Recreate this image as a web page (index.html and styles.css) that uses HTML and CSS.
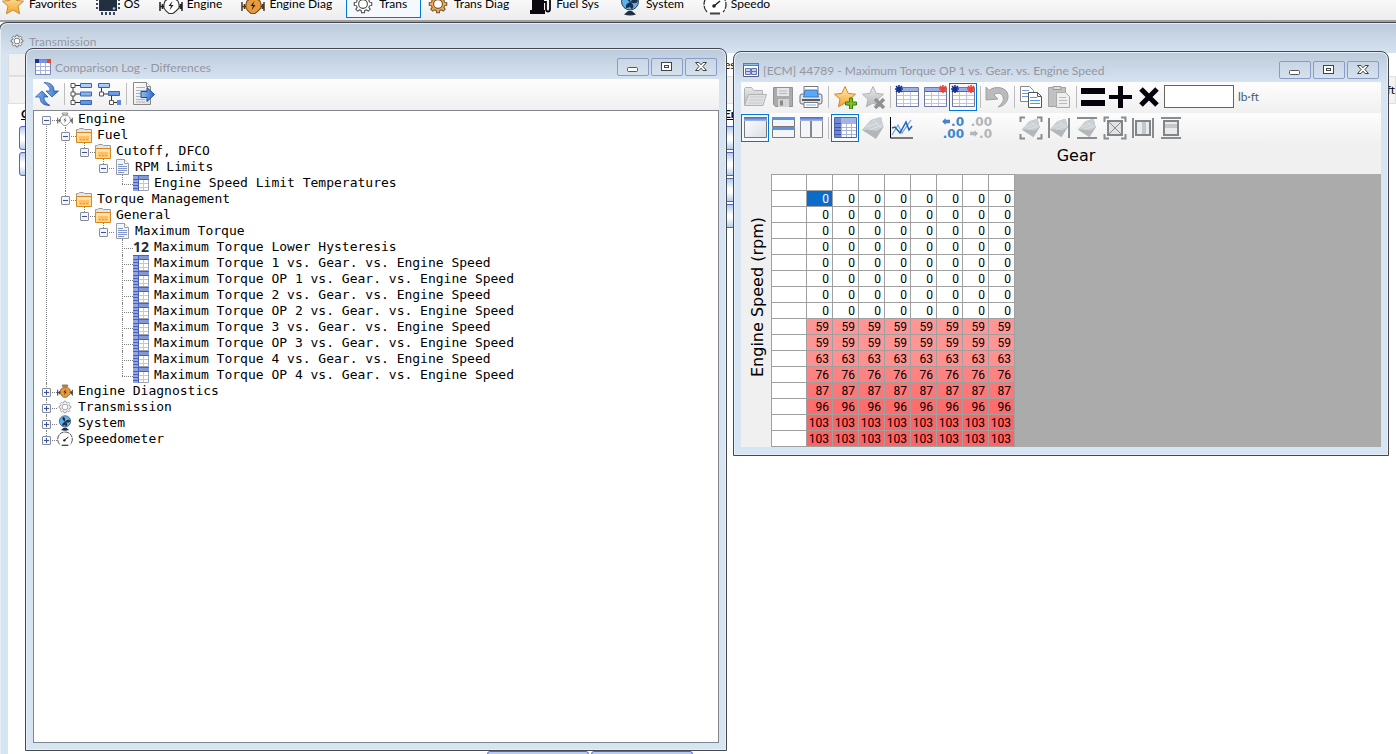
FILE: index.html
```html
<!DOCTYPE html>
<html lang="en">
<head>
<meta charset="utf-8">
<title>Transmission - Comparison Log</title>
<link rel="stylesheet" href="styles.css">
</head>
<body>
<svg class="sprite" aria-hidden="true">
  <defs>
    <linearGradient id="gold" x1="0" y1="0" x2="0" y2="1"><stop offset="0" stop-color="#ffe9b0"/><stop offset="1" stop-color="#f5a52c"/></linearGradient>
    <linearGradient id="blue" x1="0" y1="0" x2="0" y2="1"><stop offset="0" stop-color="#b8d4fb"/><stop offset="1" stop-color="#5c8fe0"/></linearGradient>
    <linearGradient id="deep" x1="0" y1="0" x2="1" y2="0"><stop offset="0" stop-color="#8fc0f2"/><stop offset="1" stop-color="#2a66c8"/></linearGradient>
    <linearGradient id="head" x1="0" y1="0" x2="0" y2="1"><stop offset="0" stop-color="#4a64b8"/><stop offset="1" stop-color="#a9bcf0"/></linearGradient>
    <linearGradient id="gray" x1="0" y1="0" x2="0" y2="1"><stop offset="0" stop-color="#e6e8ea"/><stop offset="1" stop-color="#b4b6b8"/></linearGradient>
    <linearGradient id="paper" x1="0" y1="0" x2="1" y2="1"><stop offset="0" stop-color="#fff"/><stop offset="1" stop-color="#d9dee6"/></linearGradient>

    <path id="starshape" d="M12 1.5l3.2 6.9 7.3.8-5.5 5 1.6 7.6-6.6-3.8-6.6 3.8 1.6-7.6-5.5-5 7.3-.8z"/>
    <path id="engineshape" d="M6 9l3-2h2V5H8V3h8v2h-3v2h3l3 2 1 3v4l-3 3-3 2.500h-4L7 19l-2-3v-4z"/>
    <path id="gearshape" d="M10.4 2h3.2l.5 2.6 1.8.7L18 3.800l2.200 2.200-1.500 2.100.7 1.800 2.600.5v3.200l-2.600.5-.7 1.800 1.500 2.100-2.200 2.200-2.100-1.500-1.800.7-.5 2.600h-3.200l-.5-2.600-1.800-.7L6 20.200 3.800 18l1.500-2.100-.7-1.800L2 13.600v-3.200l2.600-.5.7-1.800L3.800 6 6 3.800l2.100 1.500 1.800-.7z"/>

    <symbol id="star" viewBox="0 0 24 24"><use href="#starshape" fill="url(#gold)" stroke="#c98a30"/></symbol>
    <symbol id="chip" viewBox="0 0 24 24"><path d="M3 2h18v17H3z" fill="#222f40"/><path d="M1 3v16M23 3v16" stroke="#3d4857" stroke-width="2" stroke-dasharray="2 2"/><path d="M5 21.500h15" stroke="#3d4857" stroke-width="3" stroke-dasharray="2 2"/><circle cx="18" cy="16.500" r="1.300" fill="#9cc3e4"/></symbol>
    <symbol id="engine" viewBox="0 0 24 24"><use href="#engineshape" fill="#fff" stroke="#333" stroke-width="1.100"/><path d="M1 10v9M1 14.500h4M23 10v9M20 14.500h3M3.500 12v5M21.500 12v5" stroke="#222" stroke-width="1.500" fill="none"/><path d="M13.500 9l-4 5h2.500l-1.500 4.500 4-5.500h-2.500z" fill="#222"/></symbol>
    <symbol id="engined" viewBox="0 0 24 24"><use href="#engineshape" fill="#e89a3c" stroke="#7a5020" stroke-width="1.100"/><path d="M1 10v9M1 14.500h4M23 10v9M20 14.500h3M3.500 12v5M21.500 12v5" stroke="#4a3a28" stroke-width="1.500" fill="none"/><path d="M13.500 9l-4 5h2.500l-1.500 4.500 4-5.500h-2.500z" fill="#222"/></symbol>
    <symbol id="gear" viewBox="0 0 24 24"><g transform="translate(1.500 1.500) scale(.875)"><use href="#gearshape" fill="#fff" stroke="#444" stroke-width="1.200"/><circle cx="12" cy="12" r="5" fill="#fff" stroke="#444" stroke-width="1.200"/></g></symbol>
    <symbol id="geard" viewBox="0 0 24 24"><g transform="translate(1.500 1.500) scale(.875)"><use href="#gearshape" fill="#f3a94c" stroke="#6b5130" stroke-width="1.200"/><circle cx="12" cy="12" r="5" fill="#fff" stroke="#6b5130" stroke-width="1.200"/></g></symbol>
    <symbol id="fuel" viewBox="0 0 24 24"><path d="M4 1h12v17h1v4H2v-4h2z" fill="#0c0710"/><path d="M6 3h8v5H6z" fill="#fff"/><path d="M16 10h2v7q0 2.500 2 2.500t2-2.500V6l-3-3" fill="none" stroke="#0c0710" stroke-width="1.800"/></symbol>
    <symbol id="system" viewBox="0 0 24 24"><circle cx="12" cy="9.500" r="8.500" fill="#5fb0ee" stroke="#2c3f56"/><path d="M12 10C9 8 7 6 9 3q4 0 3 7zM12 10c3-3 6-4 8-1q-2 4-8 1zM12 10c1 4 0 6-4 6q-1-4 4-6zM12 10c4 2 4 5 2 7q-3-1-2-7z" fill="#1f2f44"/><path d="M10 19h4l4 3.500q-6 2-12 0z" fill="#1f2f44"/></symbol>
    <symbol id="speedo" viewBox="0 0 24 24"><path d="M4 20A11 11 0 1 1 20 20" fill="#fff" stroke="#333" stroke-width="1.300" stroke-dasharray="7 1"/><circle cx="11" cy="14" r="1.800" fill="#222"/><path d="M11 14l6-5" stroke="#222" stroke-width="1.500"/><path d="M7 21.500h10" stroke="#444" stroke-width="2"/></symbol>

    <symbol id="complog" viewBox="0 0 16 16"><path d="M.5.5h15v15H.5z" fill="#fff" stroke="#7a86b0"/><path d="M1 1h14v3H1z" fill="#7d93dd"/><path d="M5.500 4v11M10.500 4v11M1 7.500h14M1 11.500h14" stroke="#a9b4dc"/><path d="M0 0h4v4H0z" fill="#17349c"/><path d="M12 0h4v4h-4z" fill="#ea4431"/></symbol>
    <symbol id="ecmwin" viewBox="0 0 16 16"><path d="M.5 1.500h15v13H.5z" fill="#fff" stroke="#555e78"/><path d="M0 1h16v3H0z" fill="#3d83d8"/><path d="M1 2h14v1H1z" fill="#8ec0f4"/><path d="M2.500 6.500h5v3h-5zM8.500 6.500h5v3h-5zM2.500 9.500h5v3h-5zM8.500 9.500h5v3h-5z" fill="#c9d3f0" stroke="#6474b0"/></symbol>
    <symbol id="min" viewBox="0 0 30 16"><rect x="9.500" y="8.500" width="10" height="4" rx="1" fill="#fff" stroke="#555"/></symbol>
    <symbol id="max" viewBox="0 0 30 16"><rect x="9.500" y="3.500" width="10" height="8" fill="#fff" stroke="#444"/><rect x="12.500" y="6.500" width="4" height="2" fill="#fff" stroke="#444"/></symbol>
    <symbol id="close" viewBox="0 0 30 16"><path d="M9.500 3.500h3.500l2 2.300 2-2.300h3.500l-3.600 4 3.600 4h-3.500l-2-2.300-2 2.300H9.500l3.600-4z" fill="#fff" stroke="#444"/></symbol>

    <symbol id="refresh" viewBox="0 0 24 24"><path d="M9 .5c7 0 10 3 10 8.500h4.500l-6.500 6-6-6h4c0-4-2-6-6-8.500z" fill="url(#deep)" stroke="#2a5aa8" stroke-width=".8"/><path d="M15 23.500c-7 0-10-3-10-8.500H.5L7 9l6 6H9c0 4 2 6 6 8.500z" fill="url(#deep)" stroke="#2a5aa8" stroke-width=".8"/></symbol>
    <symbol id="expand" viewBox="0 0 24 24"><path d="M4 4v17M4 3.500h7M4 12h7M4 20.500h7" stroke="#333" fill="none"/><path d="M2 1.500h4v4H2zM2 10h4v4H2zM2 18.500h4v4H2z" fill="#fff" stroke="#555"/><path d="M11.500 1.500h11v4h-11zM11.500 10h11v4h-11zM11.500 18.500h11v4h-11z" fill="url(#blue)" stroke="#3a66b0"/></symbol>
    <symbol id="collapse" viewBox="0 0 24 24"><path d="M4.500 5v7h7M14.500 14v6.500h6" stroke="#333" fill="none"/><path d="M2.500 10h4v4h-4zM12.500 18.500h4v4h-4z" fill="#fff" stroke="#555"/><path d="M1.500 1.500h11v4h-11zM11.500 9.500h11v4h-11z" fill="url(#blue)" stroke="#3a66b0"/><path d="M20 18h4v5h-4z" fill="#5f8cd8"/></symbol>
    <symbol id="export" viewBox="0 0 24 24"><path d="M2.500.5h13l4 4v18h-17z" fill="url(#paper)" stroke="#888"/><path d="M15.500.5v4h4" fill="#fff" stroke="#888"/><path d="M5 5.500h9M5 8.500h11M5 11.500h11M5 14.500h11M5 17.500h9M5 20h9" stroke="#b0b3b8"/><path d="M10 9.500h6v-4l7.500 7-7.500 7v-4h-6z" fill="url(#deep)" stroke="#1f4c9c"/></symbol>

    <symbol id="open" viewBox="0 0 24 24"><path d="M1.500 20.500V3.500l1-1h6l2 3h9v4" fill="url(#gray)" stroke="#b0b2b4"/><path d="M1.500 20.500l4-11h18l-3.500 11z" fill="#dfe1e3" stroke="#b0b2b4"/><path d="M7 12h14M6 15h14M5 18h14" stroke="#c6c8ca"/></symbol>
    <symbol id="save" viewBox="0 0 24 24"><path d="M2.500 2.500h19v19h-17l-2-2z" fill="#a9abad" stroke="#909294"/><path d="M6 3h12v8H6z" fill="#e4e5e6"/><path d="M8 6h8M8 8.500h8" stroke="#b8babc"/><path d="M7 14h11v8H7z" fill="#d2d4d6"/><path d="M9 15.500h3v5H9z" fill="#888"/></symbol>
    <symbol id="print" viewBox="0 0 24 24"><path d="M5 1.500h14v7H5z" fill="#fff" stroke="#777"/><rect x="1" y="9" width="22" height="10" rx="2" fill="#e2e3e6" stroke="#6b6e75"/><path d="M6 5h12l1.500 7h-15z" fill="#5aa9f4" stroke="#2a6cb8" stroke-width=".8"/><path d="M3 15h18" stroke="#555b66" stroke-width="2"/><path d="M5 17.500h14v5H5z" fill="#fff" stroke="#777"/><path d="M7 20h10" stroke="#7db1e8"/></symbol>
    <symbol id="staradd" viewBox="0 0 24 24"><use href="#starshape" fill="url(#gold)" stroke="#c98a30"/><path d="M16.500 13h3v4h4v3h-4v4h-3v-4h-4v-3h4z" fill="#7cc224" stroke="#3d7810"/></symbol>
    <symbol id="stardel" viewBox="0 0 24 24"><use href="#starshape" fill="url(#gray)" stroke="#b2b5b8"/><path d="M14 14l9 9M23 14l-9 9" stroke="#8f9193" stroke-width="3.500"/></symbol>
    <symbol id="gridbase" viewBox="0 0 24 24"><path d="M1.500 2.500h22v19h-22z" fill="#fff" stroke="#7078a0"/><path d="M2 3h21v3H2z" fill="#9aaee8"/><path d="M2 6.500h21" stroke="#5567a8"/><path d="M8.500 7v14M15.500 7v14M2 10.500h21M2 14.500h21M2 18.500h21" stroke="#bcc4e2"/></symbol>
    <symbol id="burst" viewBox="0 0 8 8"><path d="M4 0v8M0 4h8M1 1l6 6M7 1L1 7" stroke="currentColor" stroke-width="1.600"/></symbol>
    <symbol id="gridl" viewBox="0 0 24 24"><use href="#gridbase" width="24" height="24"/><use href="#burst" width="8" height="8" color="#122e92"/></symbol>
    <symbol id="gridr" viewBox="0 0 24 24"><use href="#gridbase" width="24" height="24"/><use href="#burst" x="16" width="8" height="8" color="#f04030"/></symbol>
    <symbol id="gridlr" viewBox="0 0 24 24"><use href="#gridl" width="24" height="24"/><use href="#burst" x="16" width="8" height="8" color="#f04030"/></symbol>
    <symbol id="undo" viewBox="0 0 24 24"><path d="M1 2l3 3.500C10 0 23 2 23 11c0 6-4 10-10 11 5-4 6-7 5-10-1-4-6-5-9-2l4 4L1 15z" fill="#b9bbbd" stroke="#a0a2a4"/></symbol>
    <symbol id="copy" viewBox="0 0 24 24"><path d="M1.500 1.500h9l4 4v11h-13z" fill="#fff" stroke="#888"/><path d="M3 5.500h7M3 8.500h7M3 11.500h7" stroke="#6c9be0"/><path d="M9.500 7.500h9l4 4v11h-13z" fill="#fff" stroke="#555"/><path d="M18.500 7.500v4h4" fill="none" stroke="#555"/><path d="M11 12.500h7M11 15.500h10M11 18.500h10" stroke="#48a0e8"/></symbol>
    <symbol id="paste" viewBox="0 0 24 24"><path d="M1.500 2.500h17v19h-17z" fill="#bfc1c3" stroke="#a0a2a4"/><path d="M6 1.500h8v3H6z" fill="#ddd" stroke="#999"/><path d="M9.500 7.500h9l4 4v11h-13z" fill="#eee" stroke="#aaa"/><path d="M12 12.500h7M12 15.500h8M12 18.500h8" stroke="#bbb"/></symbol>
    <symbol id="eq" viewBox="0 0 24 24"><path d="M0 3h24v6H0zM0 15h24v6H0z" fill="#07010c"/></symbol>
    <symbol id="plus" viewBox="0 0 24 24"><path d="M9 1h5v9h9v4h-9v9H9v-9H0v-4h9z" fill="#07010c"/></symbol>
    <symbol id="times" viewBox="0 0 24 24"><path d="M4 4l16 16M20 4L4 20" stroke="#07010c" stroke-width="5"/></symbol>

    <symbol id="pane1" viewBox="0 0 24 24"><path d="M1.500 1.500h22v20h-22z" fill="url(#paper)" stroke="#777"/><path d="M1 1h23v4H1z" fill="url(#head)"/></symbol>
    <symbol id="pane2" viewBox="0 0 24 24"><path d="M1.500 1.500h22v9h-22zM1.500 12.500h22v9h-22z" fill="#f4f5f8" stroke="#777"/><path d="M1 1h23v3H1zM1 11h23v3H1z" fill="#5a94e0"/></symbol>
    <symbol id="pane3" viewBox="0 0 24 24"><path d="M1.500 1.500h10v20h-10zM12.500 1.500h11v20h-11z" fill="#f4f5f8" stroke="#888"/><path d="M1 1h23v4H1z" fill="url(#head)"/></symbol>
    <symbol id="table" viewBox="0 0 24 24"><path d="M1.500 1.500h22v20h-22z" fill="#fff" stroke="#5666a4"/><path d="M2 2h21v5H2z" fill="#a3b4ea"/><path d="M2 2h6v19H2z" fill="#6f88d4"/><path d="M8.500 2v19M13.500 2v19M18.500 2v19M8 7.500h15M8 11.500h15M8 14.500h15M8 18.500h15" stroke="#a9b3d6"/><path d="M2 7.500h6M2 11.500h6M2 14.500h6M2 18.500h6" stroke="#3d55a4"/></symbol>
    <symbol id="surface" viewBox="0 0 24 24"><path d="M1 14L10 4l10-3 2.500 10-7.500 12z" fill="#b4b7ba"/><path d="M1 14L10 4l10-3 2.500 10-7 4-7-1.500z" fill="#cbd0d4"/><path d="M5 11l12-4M8 14l13-5M12 4l8 8" stroke="#dde2e6"/></symbol>
    <symbol id="chart" viewBox="0 0 24 24"><path d="M1.500 1v21H24" fill="none" stroke="#000"/><path d="M3 19l6-10 4 8 9-13" fill="none" stroke="#6ea6e2" stroke-width="1.200"/><path d="M3 12l3-1 5 6 6-11 3 8 3-4" fill="none" stroke="#1d62b4" stroke-width="1.500"/></symbol>
    <symbol id="left" viewBox="0 0 10 8"><path d="M0 4l4-4v2h5v4H4v2z" fill="currentColor"/></symbol>
    <symbol id="right" viewBox="0 0 10 8"><path d="M9 4L5 0v2H0v4h5v2z" fill="currentColor"/></symbol>
    <symbol id="corners" viewBox="0 0 24 24"><path d="M6 1.500H1.500V6M18 1.500h4.500V6M6 22.500H1.500V18M18 22.500h4.500V18" fill="none" stroke="#8a8c8e" stroke-width="2"/></symbol>
    <symbol id="fit1" viewBox="0 0 24 24"><use href="#surface" x="2" y="2" width="20" height="20"/><use href="#corners" width="24" height="24"/></symbol>
    <symbol id="fit2" viewBox="0 0 24 24"><use href="#surface" x="2" y="1" width="20" height="22"/><path d="M2 2v20M22 2v20" stroke="#8a8c8e" stroke-width="2"/></symbol>
    <symbol id="fit3" viewBox="0 0 24 24"><use href="#surface" x="2" y="2" width="20" height="20"/><path d="M2 2h20M2 22h20" stroke="#8a8c8e" stroke-width="2"/></symbol>
    <symbol id="fit4" viewBox="0 0 24 24"><path d="M5 5h14v14H5z" fill="#e0e2e4" stroke="#7f8589" stroke-width="2"/><path d="M6 6l12 12M18 6L6 18" stroke="#8a8c8e"/><use href="#corners" width="24" height="24"/></symbol>
    <symbol id="fit5" viewBox="0 0 24 24"><path d="M5 5h14v14H5z" fill="#e8eaec" stroke="#7f8589" stroke-width="2"/><path d="M11 6h4v12h-4z" fill="#c4c8cb"/><path d="M2 2v20M22 2v20" stroke="#8a8c8e" stroke-width="2"/></symbol>
    <symbol id="fit6" viewBox="0 0 24 24"><path d="M5 5h14v14H5z" fill="#e8eaec" stroke="#7f8589" stroke-width="2"/><path d="M6 8h12v4H6z" fill="#c4c8cb"/><path d="M2 2h20M2 22h20" stroke="#8a8c8e" stroke-width="2"/></symbol>

    <symbol id="folder" viewBox="0 0 16 16"><path d="M.5 14.500v-12h2l1-1h4l1 1h7v12z" fill="#e3e5ec" stroke="#9a9da8"/><path d="M.5 5.500h15v10H.5z" fill="#ffdc9a" stroke="#d8871c"/><path d="M2 7h12" stroke="#fff0cc"/><path d="M3 9h10v5H3z" fill="#ffc063"/><path d="M4 12.500h8" stroke="#f0a040" stroke-dasharray="2 1"/></symbol>
    <symbol id="doc" viewBox="0 0 16 16"><path d="M2.500.5h8l4 4v11h-12z" fill="#f2f5fa" stroke="#9a9da4"/><path d="M10.500.5v4h4" fill="#fff" stroke="#9a9da4"/><path d="M4 5.500h5M4 7.500h9M4 9.500h9M4 11.500h9M4 13.500h6" stroke="#7f97cc"/></symbol>
    <symbol id="cells" viewBox="0 0 16 16"><path d="M.5.5h15v15H.5z" fill="#fff" stroke="#a0a6b4"/><path d="M0 0h16v5H0z" fill="#8298dc"/><path d="M0 1h5v15H0z" fill="#8fa5e6"/><path d="M0 .5h16M0 4.500h16M0 7.500h5M0 10.500h5M0 13.500h5M5.500 0v16" stroke="#4a62b4"/><path d="M6 8.500h9M6 12.500h9M10.500 5v10" stroke="#c4c8d0"/></symbol>
  </defs>
</svg>

<nav class="ribbon" aria-label="Sections">
  <button class="section"><svg><use href="#star"/></svg>Favorites</button>
  <button class="section"><svg><use href="#chip"/></svg>OS</button>
  <button class="section"><svg><use href="#engine"/></svg>Engine</button>
  <button class="section"><svg><use href="#engined"/></svg>Engine Diag</button>
  <button class="section active"><svg><use href="#gear"/></svg>Trans</button>
  <button class="section"><svg><use href="#geard"/></svg>Trans Diag</button>
  <button class="section"><svg><use href="#fuel"/></svg>Fuel Sys</button>
  <button class="section"><svg><use href="#system"/></svg>System</button>
  <button class="section"><svg><use href="#speedo"/></svg>Speedo</button>
</nav>

<main class="desktop">
  <section class="window trans">
    <header class="titlebar"><svg class="winicon"><use href="#gear"/></svg><h2>Transmission</h2></header>
    <div class="form">
      <div class="form-tabs"><span class="tab"></span><span class="tab-text">es</span></div>
      <div class="form-info"><span>ft</span></div>
      <div class="form-body">
        <div class="form-col"><h3>C</h3><button class="field" aria-label="Edit"></button><button class="field" aria-label="View"></button></div>
        <div class="form-col"><h3>En</h3><button class="field" aria-label="Table 1"></button><button class="field" aria-label="Table 2"></button><button class="field" aria-label="Table 3"></button><button class="field" aria-label="Table 4"></button></div>
      </div>
      <div class="form-foot"><button class="field" aria-label="Previous"></button><button class="field" aria-label="Next"></button></div>
    </div>
  </section>

  <section class="window log">
    <header class="titlebar">
      <svg class="winicon"><use href="#complog"/></svg><h2>Comparison Log - Differences</h2>
      <button class="ctl" aria-label="Minimize"><svg><use href="#min"/></svg></button><button class="ctl" aria-label="Maximize"><svg><use href="#max"/></svg></button><button class="ctl" aria-label="Close"><svg><use href="#close"/></svg></button>
    </header>
    <div class="toolbar">
      <button class="tool" aria-label="Refresh"><svg><use href="#refresh"/></svg></button>
      <i class="sep"></i>
      <button class="tool" aria-label="Expand all"><svg><use href="#expand"/></svg></button>
      <button class="tool" aria-label="Collapse all"><svg><use href="#collapse"/></svg></button>
      <i class="sep"></i>
      <button class="tool" aria-label="Export"><svg><use href="#export"/></svg></button>
    </div>
    <div class="treebox">
      <ul class="tree">
        <li><div class="node"><button class="toggle minus" aria-label="Collapse"></button><svg class="faint"><use href="#engine"/></svg>Engine</div>
          <ul>
            <li><div class="node"><button class="toggle minus" aria-label="Collapse"></button><svg><use href="#folder"/></svg>Fuel</div>
              <ul><li><div class="node"><button class="toggle minus" aria-label="Collapse"></button><svg><use href="#folder"/></svg>Cutoff, DFCO</div>
                <ul><li><div class="node"><button class="toggle minus" aria-label="Collapse"></button><svg><use href="#doc"/></svg>RPM Limits</div>
                  <ul><li><div class="node leaf"><svg><use href="#cells"/></svg>Engine Speed Limit Temperatures</div></li></ul>
                </li></ul>
              </li></ul>
            </li>
            <li><div class="node"><button class="toggle minus" aria-label="Collapse"></button><svg><use href="#folder"/></svg>Torque Management</div>
              <ul><li><div class="node"><button class="toggle minus" aria-label="Collapse"></button><svg><use href="#folder"/></svg>General</div>
                <ul><li><div class="node"><button class="toggle minus" aria-label="Collapse"></button><svg><use href="#doc"/></svg>Maximum Torque</div>
                  <ul>
                    <li><div class="node leaf"><b class="num">12</b>Maximum Torque Lower Hysteresis</div></li>
                    <li><div class="node leaf"><svg><use href="#cells"/></svg>Maximum Torque 1 vs. Gear. vs. Engine Speed</div></li>
                    <li><div class="node leaf"><svg><use href="#cells"/></svg>Maximum Torque OP 1 vs. Gear. vs. Engine Speed</div></li>
                    <li><div class="node leaf"><svg><use href="#cells"/></svg>Maximum Torque 2 vs. Gear. vs. Engine Speed</div></li>
                    <li><div class="node leaf"><svg><use href="#cells"/></svg>Maximum Torque OP 2 vs. Gear. vs. Engine Speed</div></li>
                    <li><div class="node leaf"><svg><use href="#cells"/></svg>Maximum Torque 3 vs. Gear. vs. Engine Speed</div></li>
                    <li><div class="node leaf"><svg><use href="#cells"/></svg>Maximum Torque OP 3 vs. Gear. vs. Engine Speed</div></li>
                    <li><div class="node leaf"><svg><use href="#cells"/></svg>Maximum Torque 4 vs. Gear. vs. Engine Speed</div></li>
                    <li><div class="node leaf"><svg><use href="#cells"/></svg>Maximum Torque OP 4 vs. Gear. vs. Engine Speed</div></li>
                  </ul>
                </li></ul>
              </li></ul>
            </li>
          </ul>
        </li>
        <li><div class="node"><button class="toggle plus" aria-label="Expand"></button><svg><use href="#engined"/></svg>Engine Diagnostics</div></li>
        <li><div class="node"><button class="toggle plus" aria-label="Expand"></button><svg class="faint"><use href="#gear"/></svg>Transmission</div></li>
        <li><div class="node"><button class="toggle plus" aria-label="Expand"></button><svg><use href="#system"/></svg>System</div></li>
        <li><div class="node"><button class="toggle plus" aria-label="Expand"></button><svg><use href="#speedo"/></svg>Speedometer</div></li>
      </ul>
    </div>
  </section>

  <section class="window ecm">
    <header class="titlebar">
      <svg class="winicon"><use href="#ecmwin"/></svg><h2>[ECM] 44789 - Maximum Torque OP 1 vs. Gear. vs. Engine Speed</h2>
      <button class="ctl" aria-label="Minimize"><svg><use href="#min"/></svg></button><button class="ctl" aria-label="Maximize"><svg><use href="#max"/></svg></button><button class="ctl" aria-label="Close"><svg><use href="#close"/></svg></button>
    </header>
    <div class="toolbar">
      <button class="tool" aria-label="Open"><svg><use href="#open"/></svg></button>
      <button class="tool" aria-label="Save"><svg><use href="#save"/></svg></button>
      <button class="tool" aria-label="Print"><svg><use href="#print"/></svg></button>
      <i class="sep"></i>
      <button class="tool" aria-label="Add favorite"><svg><use href="#staradd"/></svg></button>
      <button class="tool" aria-label="Remove favorite"><svg><use href="#stardel"/></svg></button>
      <i class="sep"></i>
      <button class="tool" aria-label="Show base"><svg><use href="#gridl"/></svg></button>
      <button class="tool" aria-label="Show compare"><svg><use href="#gridr"/></svg></button>
      <button class="tool on" aria-label="Show differences"><svg><use href="#gridlr"/></svg></button>
      <i class="sep"></i>
      <button class="tool" aria-label="Undo"><svg><use href="#undo"/></svg></button>
      <i class="sep"></i>
      <button class="tool" aria-label="Copy"><svg><use href="#copy"/></svg></button>
      <button class="tool" aria-label="Paste"><svg><use href="#paste"/></svg></button>
      <i class="sep"></i>
      <button class="tool" aria-label="Set equal"><svg><use href="#eq"/></svg></button>
      <button class="tool" aria-label="Add"><svg><use href="#plus"/></svg></button>
      <button class="tool" aria-label="Multiply"><svg><use href="#times"/></svg></button>
      <input class="amount" id="amount" type="text"><label class="unit" for="amount">lb·ft</label>
    </div>
    <div class="toolbar">
      <button class="tool on" aria-label="Single pane"><svg><use href="#pane1"/></svg></button>
      <button class="tool" aria-label="Split rows"><svg><use href="#pane2"/></svg></button>
      <button class="tool" aria-label="Split columns"><svg><use href="#pane3"/></svg></button>
      <i class="sep"></i>
      <button class="tool on" aria-label="Table"><svg><use href="#table"/></svg></button>
      <button class="tool" aria-label="Surface"><svg><use href="#surface"/></svg></button>
      <button class="tool" aria-label="Chart"><svg><use href="#chart"/></svg></button>
      <i class="gap"></i>
      <button class="tool dec more"><span><svg><use href="#left"/></svg>.0</span><span>.00</span></button>
      <button class="tool dec less"><span>.00</span><span><svg><use href="#right"/></svg>.0</span></button>
      <i class="gap"></i>
      <button class="tool" aria-label="Fit surface"><svg><use href="#fit1"/></svg></button>
      <button class="tool" aria-label="Fit surface width"><svg><use href="#fit2"/></svg></button>
      <button class="tool" aria-label="Fit surface height"><svg><use href="#fit3"/></svg></button>
      <button class="tool" aria-label="Fit table"><svg><use href="#fit4"/></svg></button>
      <button class="tool" aria-label="Fit columns"><svg><use href="#fit5"/></svg></button>
      <button class="tool" aria-label="Fit rows"><svg><use href="#fit6"/></svg></button>
    </div>
    <div class="sheet">
      <div class="xlabel">Gear</div>
      <div class="ylabel">Engine Speed (rpm)</div>
      <div class="gridarea">
        <table class="data">
          <thead><tr><th></th><th></th><th></th><th></th><th></th><th></th><th></th><th></th><th></th></tr></thead>
          <tbody>
            <tr><th></th><td class="sel">0</td><td>0</td><td>0</td><td>0</td><td>0</td><td>0</td><td>0</td><td>0</td></tr>
            <tr><th></th><td>0</td><td>0</td><td>0</td><td>0</td><td>0</td><td>0</td><td>0</td><td>0</td></tr>
            <tr><th></th><td>0</td><td>0</td><td>0</td><td>0</td><td>0</td><td>0</td><td>0</td><td>0</td></tr>
            <tr><th></th><td>0</td><td>0</td><td>0</td><td>0</td><td>0</td><td>0</td><td>0</td><td>0</td></tr>
            <tr><th></th><td>0</td><td>0</td><td>0</td><td>0</td><td>0</td><td>0</td><td>0</td><td>0</td></tr>
            <tr><th></th><td>0</td><td>0</td><td>0</td><td>0</td><td>0</td><td>0</td><td>0</td><td>0</td></tr>
            <tr><th></th><td>0</td><td>0</td><td>0</td><td>0</td><td>0</td><td>0</td><td>0</td><td>0</td></tr>
            <tr><th></th><td>0</td><td>0</td><td>0</td><td>0</td><td>0</td><td>0</td><td>0</td><td>0</td></tr>
            <tr class="h1"><th></th><td>59</td><td>59</td><td>59</td><td>59</td><td>59</td><td>59</td><td>59</td><td>59</td></tr>
            <tr class="h1"><th></th><td>59</td><td>59</td><td>59</td><td>59</td><td>59</td><td>59</td><td>59</td><td>59</td></tr>
            <tr class="h2"><th></th><td>63</td><td>63</td><td>63</td><td>63</td><td>63</td><td>63</td><td>63</td><td>63</td></tr>
            <tr class="h3"><th></th><td>76</td><td>76</td><td>76</td><td>76</td><td>76</td><td>76</td><td>76</td><td>76</td></tr>
            <tr class="h4"><th></th><td>87</td><td>87</td><td>87</td><td>87</td><td>87</td><td>87</td><td>87</td><td>87</td></tr>
            <tr class="h5"><th></th><td>96</td><td>96</td><td>96</td><td>96</td><td>96</td><td>96</td><td>96</td><td>96</td></tr>
            <tr class="h6"><th></th><td>103</td><td>103</td><td>103</td><td>103</td><td>103</td><td>103</td><td>103</td><td>103</td></tr>
            <tr class="h6"><th></th><td>103</td><td>103</td><td>103</td><td>103</td><td>103</td><td>103</td><td>103</td><td>103</td></tr>
          </tbody>
        </table>
      </div>
    </div>
  </section>
</main>
</body>
</html>
```

FILE: styles.css
```css
* { box-sizing: border-box; }
body {
  margin: 0;
  height: 100vh;
  display: flex;
  flex-direction: column;
  overflow: hidden;
  background: #fff;
  color: #000;
  font: 12px/16px Lato, "Noto Sans", sans-serif;
}
button { font: inherit; color: inherit; margin: 0; padding: 0; border: 0; background: none; }
h2, h3 { margin: 0; font: inherit; }
ul { margin: 0; padding: 0; list-style: none; }
svg { display: block; flex: none; }
.sprite { position: absolute; width: 0; height: 0; }

/* Section ribbon */
.ribbon {
  flex: none;
  display: flex;
  align-items: flex-end;
  height: 22px;
  padding-bottom: 2px;
  overflow: hidden;
  background: linear-gradient(#f9f9f9, #ececee);
  border-bottom: 2px solid #a0a0a0;
}
.section {
  flex: none;
  display: flex;
  align-items: center;
  gap: 4px;
  height: 28px;
  padding: 0 13px 0 4px;
  border: 1px solid transparent;
  white-space: nowrap;
}
.section:first-child { padding-left: 0; }
.section svg { width: 24px; height: 24px; }
.section.active { border-color: #0078d7; background: #f5f9fd; }

/* Windows on the desktop */
.desktop { position: relative; flex: 1; min-height: 0; overflow: hidden; }
.window {
  position: absolute;
  display: flex;
  flex-direction: column;
  padding: 0 8px 8px;
  border: 1px solid #45484f;
  border-radius: 8px 8px 0 0;
  background: linear-gradient(#bccbdb, #d7e4f2 32px);
  box-shadow: inset 0 0 0 1px #e6eff8;
}
.titlebar { flex: none; display: flex; align-items: center; gap: 2px; height: 30px; padding: 6px 2px 0; color: #96969f; }
.titlebar h2 { flex: 1; padding: 1px 0 0 2px; white-space: nowrap; overflow: hidden; }
.winicon { width: 16px; height: 16px; }
.ctl {
  width: 32px;
  height: 18px;
  border: 1px solid #8c9ac6;
  border-radius: 2px;
  background: linear-gradient(#c9d6e4, #d6e1ee);
}
.ctl svg { width: 30px; height: 16px; }

.trans { left: -1px; right: -9px; top: 0; bottom: -21px; padding: 0 8px; border-bottom: 0; }
.trans .titlebar { padding: 6px 1px 0; }
.form { flex: 1; display: flex; flex-direction: column; background: #fff; }
.form-tabs { display: flex; align-items: center; height: 23px; gap: 616px; }
.tab { width: 100px; height: 23px; background: #f0f0f0; border: 1px solid #dcdcdc; }
.form-info { display: flex; justify-content: flex-end; align-items: center; height: 28px; background: #f3f3f3; border: 1px solid #e0e0e0; }
.form-body { flex: 1; display: flex; gap: 503px; padding: 2px 11px; }
.form-col { width: 200px; display: flex; flex-direction: column; gap: 2px; }
.form-col h3 { font-weight: bold; text-decoration: underline; height: 18px; padding-left: 2px; }
.field { height: 24px; border: 1px solid #5566c0; border-radius: 3px; background: linear-gradient(#b4cdec, #fff 45%, #fff 60%, #b4cdec); }
.form-foot { display: flex; gap: 2px; padding-left: 479px; }
.form-foot .field { width: 102px; background: #b9c9f4; }

.log { left: 25px; width: calc(50% + 4px); top: 26px; bottom: 3px; padding: 0 7px 7px; }
.ecm { left: calc(50% + 35px); right: 7px; top: 29px; padding: 0 7px 8px; }

/* Toolbars */
.toolbar {
  flex: none;
  display: flex;
  align-items: center;
  height: 31px;
  padding-bottom: 2px;
  background: linear-gradient(#fdfdfd, #f0f0f0);
}
.tool { flex: none; width: 28px; height: 28px; padding: 1px; border: 1px solid transparent; }
.tool svg { width: 24px; height: 24px; }
.tool.on { border-color: #0078d7; background: #f5fafe; }
.sep { flex: none; width: 1px; height: 22px; margin: 0 2px 0 3px; background: #bdbdbd; }
.gap { flex: none; width: 23px; }
.amount { width: 70px; height: 23px; margin-left: 1px; border: 1px solid #646464; background: #fff; }
.unit { padding-left: 4px; color: #44606e; }
.tool.dec { display: flex; flex-direction: column; justify-content: center; font: bold 12px/12px "DejaVu Sans", sans-serif; }
.dec span { display: flex; justify-content: flex-end; align-items: center; }
.dec svg { width: 9px; height: 7px; }
.more { color: #3f86cc; }
.less { color: #b2b4b6; }

/* Tree */
.treebox { flex: 1; min-height: 0; overflow: hidden; padding-left: 8px; border: 1px solid #82878f; background: #fff; }
.tree { font: 13px/16px "DejaVu Sans Mono", "Liberation Mono", monospace; }
.tree ul { margin-left: 19px; }
.tree li { position: relative; }
.tree li::before { content: ""; position: absolute; left: 4px; top: 0; bottom: 0; border-left: 1px dotted #808080; }
.tree li:last-child::before { bottom: auto; height: 9px; }
.tree > li:first-child::before { top: 9px; }
.node { position: relative; display: flex; align-items: center; gap: 5px; height: 16px; white-space: nowrap; }
.node svg { width: 16px; height: 16px; }
.node::before { content: ""; position: absolute; left: 4px; top: 9px; width: 11px; border-top: 1px dotted #808080; }
.leaf { padding-left: 15px; }
.toggle { position: relative; width: 9px; height: 9px; margin: 2px 1px 0 0; border: 1px solid #848c98; border-radius: 1px; background: #f6f6f6 linear-gradient(#3a50a8, #3a50a8) center / 5px 1px no-repeat; }
.plus { background-image: linear-gradient(#3a50a8, #3a50a8), linear-gradient(#3a50a8, #3a50a8); background-size: 5px 1px, 1px 5px; }
.faint { opacity: 0.7; }
.num { width: 16px; font: bold 14px/16px "Noto Sans", sans-serif; color: #252d38; }

/* Value grid */
.sheet { display: grid; grid-template-columns: 30px 1fr; grid-template-rows: 30px auto; background: #f0f0f0; }
.xlabel { grid-column: 2; text-align: center; font: 16px/24px "DejaVu Sans", sans-serif; }
.ylabel { display: flex; align-items: center; justify-content: center; padding: 26px 4px 0 0; writing-mode: vertical-rl; transform: rotate(180deg); font: 16px/20px "DejaVu Sans", sans-serif; white-space: nowrap; }
.gridarea { background: #ababab; }
.data { border-collapse: collapse; table-layout: fixed; width: 244px; background: #fff; font-family: Roboto, "Noto Sans", sans-serif; }
.data th, .data td { width: 26px; height: 16px; padding: 1px 3px 0 0; border: 1px solid #a0a0a0; text-align: right; font-weight: normal; line-height: 14px; }
.data th:first-child { width: 35px; }
.data .sel { background: #0a6cc8; color: #fff; }
.h1 td { background: #ff9696; }
.h2 td { background: #ff9191; }
.h3 td { background: #ff8282; }
.h4 td { background: #ff7676; }
.h5 td { background: #ff6c6c; }
.h6 td { background: #ff6464; }
```
